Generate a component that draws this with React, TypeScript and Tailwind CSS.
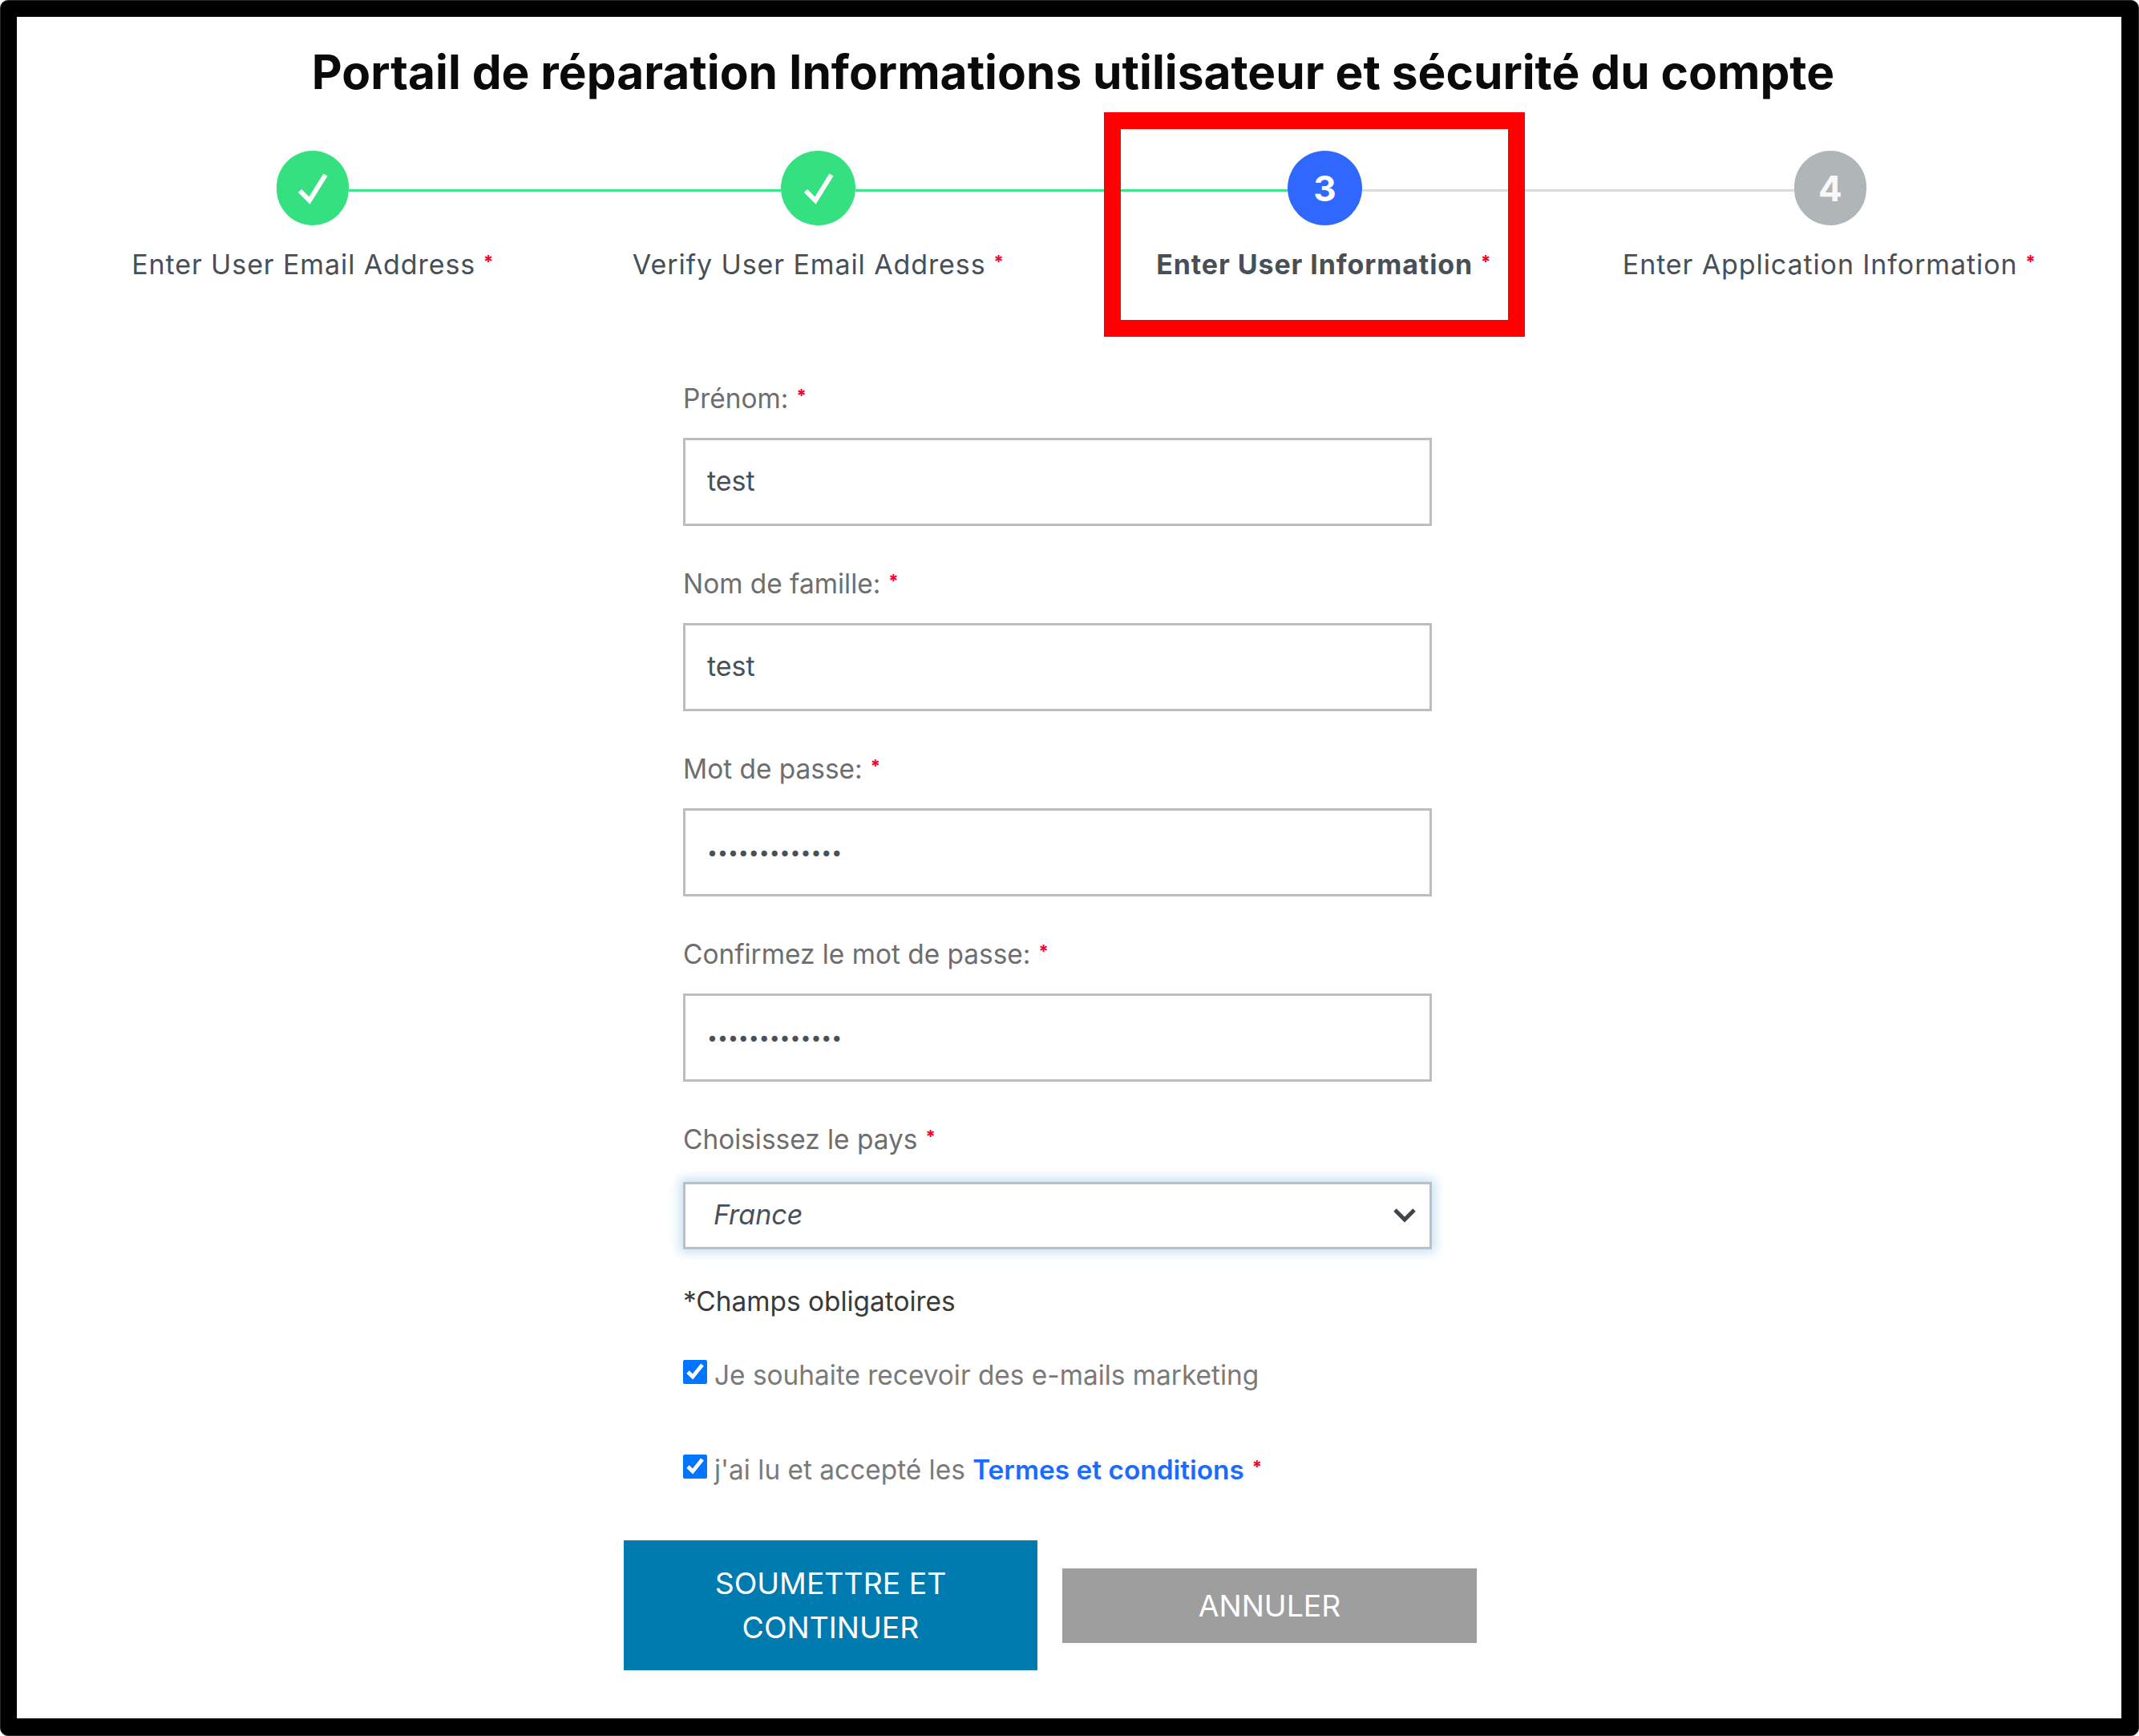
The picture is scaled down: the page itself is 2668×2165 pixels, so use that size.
import React from "react";

const STEPS = [
  { label: "Enter User Email Address" },
  { label: "Verify User Email Address" },
  { label: "Enter User Information", active: true },
  { label: "Enter Application Information" },
];

const FIELDS = [
  { label: "Prénom:", type: "text", value: "test" },
  { label: "Nom de famille:", type: "text", value: "test" },
  { label: "Mot de passe:", type: "password", value: "aaaaaaaaaaaaa" },
  { label: "Confirmez le mot de passe:", type: "password", value: "aaaaaaaaaaaaa" },
];

function Star({ className = "" }: { className?: string }) {
  return (
    <span className={"relative top-[-8px] ml-[10px] text-[22px] leading-none font-bold text-[#f5002d] " + className}>*</span>
  );
}

function Check() {
  return (
    <svg width="40" height="42" viewBox="0 0 40 42" fill="none" stroke="#fff" strokeWidth="6">
      <path d="M4 24 L16 36 L36 4" />
    </svg>
  );
}

function Circle({ className, children }: { className: string; children: React.ReactNode }) {
  return (
    <div className={"flex h-[93px] shrink-0 items-center justify-center rounded-full text-[44px] font-bold text-white " + className}>
      {children}
    </div>
  );
}

function Stepper() {
  return (
    <div className="relative mt-[58px]">
      <div className="ml-[324px] flex h-[93px] w-[1983px] items-center">
        <Circle className="w-[90px] bg-[#34e07f]"><Check /></Circle>
        <div className="mt-[5px] h-[3px] flex-1 bg-[#3de58a]" />
        <Circle className="w-[93px] bg-[#34e07f]"><Check /></Circle>
        <div className="mt-[5px] h-[3px] flex-1 bg-[#3de58a]" />
        <Circle className="w-[93px] bg-[#3068ff]">3</Circle>
        <div className="mt-[5px] h-[3px] flex-1 bg-[#dcdcdc]" />
        <Circle className="w-[90px] bg-[#b0b5b8]"><span className="text-white/90">4</span></Circle>
      </div>
      <div className="ml-[54px] mt-[27px] grid w-[2522px] grid-cols-4">
        {STEPS.map((s) => (
          <div
            key={s.label}
            className={"text-center text-[34px] leading-[44px] tracking-[0.9px] text-[#474f57] " + (s.active ? "font-bold" : "font-normal")}
          >
            {s.label}
            <Star className="ml-[9px]" />
          </div>
        ))}
      </div>
      {/* annotation box drawn over the screenshot */}
      <div className="absolute left-[1356px] top-[-48px] h-[280px] w-[525px] border-x-[21px] border-y-[21px] border-[#ff0000]" />
    </div>
  );
}

function Field({ label, type, value }: { label: string; type: string; value: string }) {
  return (
    <div className="mb-[49px]">
      <div className="pt-[1px] pb-[-1px] text-[33.4px] leading-[44px] text-[#6e6e6e]">
        {label}
        <Star />
      </div>
      <input
        readOnly
        type={type}
        value={value}
        className={
          "mt-[27px] block h-[110px] w-full border-[3px] border-[#bdbdbd] bg-white pl-[27px] text-[#495057] outline-none " +
          (type === "password" ? "text-[23px]" : "pb-[3px] text-[34px]")
        }
      />
    </div>
  );
}

export default function App() {
  return (
    <div className="h-[2165px] w-[2668px] bg-white font-['Inter','Liberation_Sans',sans-serif]">
      <div className="h-full w-full rounded-[10px] border border-[#2a2a2a] bg-black p-[20px]">
        <div className="h-[2122px] w-[2625px] overflow-hidden bg-white">
          <h1 className="pl-[10px] pt-[29px] text-center text-[58.6px] leading-[80px] font-bold text-[#0a0a0a]">
            Portail de réparation Informations utilisateur et sécurité du compte
          </h1>

          <Stepper />

          <div className="ml-[831px] mt-[122px] w-[934px]">
            {FIELDS.map((f) => (
              <Field key={f.label} {...f} />
            ))}

            <div className="pt-[1px] text-[33.4px] leading-[44px] text-[#6e6e6e]">
              Choisissez le pays
              <Star />
            </div>
            <div className="mt-[31px] flex h-[84px] items-center justify-between border-[3px] border-[#b9c0c6] bg-white pl-[35px] pr-[17px] shadow-[0_0_12px_4px_rgba(150,200,235,0.55)]">
              <span className="-mt-[4px] text-[34px] italic text-[#495057]">France</span>
              <svg width="28" height="18" viewBox="0 0 28 18" fill="none" stroke="#3f444a" strokeWidth="5">
                <path d="M2 2 L14 14 L26 2" />
              </svg>
            </div>

            <div className="mt-[43px] text-[33.4px] leading-[44px] text-[#3a3a3a]">*Champs obligatoires</div>

            <label className="mt-[48px] flex items-center text-[33.4px] leading-[44px] text-[#7a7a7a]">
              <input type="checkbox" readOnly checked className="-mt-[8px] h-[30px] w-[30px] accent-[#0075ff]" />
              <span className="ml-[9px]">Je souhaite recevoir des e-mails marketing</span>
            </label>

            <label className="mt-[74px] flex items-center text-[33.4px] leading-[44px] text-[#7a7a7a]">
              <input type="checkbox" readOnly checked className="-mt-[8px] h-[30px] w-[30px] accent-[#0075ff]" />
              <span className="ml-[9px]">
                j'ai lu et accepté les <span className="font-semibold text-[#1a6bff]">Termes et conditions</span>
                <Star />
              </span>
            </label>

            <div className="-ml-[74px] mt-[66px] flex w-[1064px] items-center gap-[31px] text-[37.4px] leading-[55px] text-white">
              <button className="h-[162px] w-[516px] shrink-0 bg-[#007bb0] px-[60px]">SOUMETTRE ET CONTINUER</button>
              <button className="h-[93px] w-[517px] shrink-0 bg-[#9e9e9e]">ANNULER</button>
            </div>
          </div>
        </div>
      </div>
    </div>
  );
}
